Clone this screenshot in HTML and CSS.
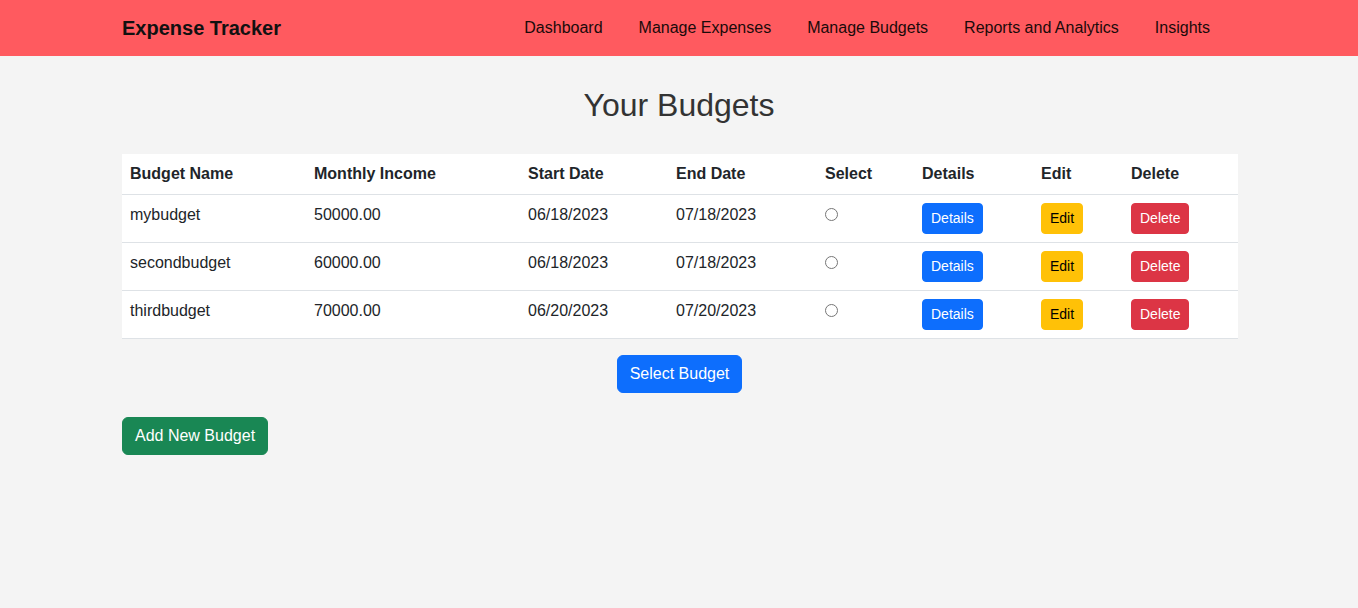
FILE: index.html
```html
<!DOCTYPE html>
<html lang="en">
<head>
<meta charset="utf-8">
<title>Expense Tracker</title>
<link rel="stylesheet" href="styles.css">
</head>
<body>
<nav class="navbar">
  <div class="container nav-inner">
    <a class="brand" href="#">Expense Tracker</a>
    <ul class="nav-links">
      <li><a href="#">Dashboard</a></li>
      <li><a href="#">Manage Expenses</a></li>
      <li><a href="#">Manage Budgets</a></li>
      <li><a href="#">Reports and Analytics</a></li>
      <li><a href="#">Insights</a></li>
    </ul>
  </div>
</nav>
<main class="container">
  <h2 class="title">Your Budgets</h2>
  <table class="budgets">
    <thead>
      <tr>
        <th class="c-name">Budget Name</th>
        <th class="c-income">Monthly Income</th>
        <th class="c-start">Start Date</th>
        <th class="c-end">End Date</th>
        <th class="c-select">Select</th>
        <th class="c-details">Details</th>
        <th class="c-edit">Edit</th>
        <th class="c-delete">Delete</th>
      </tr>
    </thead>
    <tbody>
      <tr>
        <td>mybudget</td><td>50000.00</td><td>06/18/2023</td><td>07/18/2023</td>
        <td><input type="radio" name="budget" class="radio"></td>
        <td class="btn-cell"><button class="btn btn-sm btn-primary">Details</button></td>
        <td class="btn-cell"><button class="btn btn-sm btn-warning">Edit</button></td>
        <td class="btn-cell"><button class="btn btn-sm btn-danger">Delete</button></td>
      </tr>
      <tr>
        <td>secondbudget</td><td>60000.00</td><td>06/18/2023</td><td>07/18/2023</td>
        <td><input type="radio" name="budget" class="radio"></td>
        <td class="btn-cell"><button class="btn btn-sm btn-primary">Details</button></td>
        <td class="btn-cell"><button class="btn btn-sm btn-warning">Edit</button></td>
        <td class="btn-cell"><button class="btn btn-sm btn-danger">Delete</button></td>
      </tr>
      <tr>
        <td>thirdbudget</td><td>70000.00</td><td>06/20/2023</td><td>07/20/2023</td>
        <td><input type="radio" name="budget" class="radio"></td>
        <td class="btn-cell"><button class="btn btn-sm btn-primary">Details</button></td>
        <td class="btn-cell"><button class="btn btn-sm btn-warning">Edit</button></td>
        <td class="btn-cell"><button class="btn btn-sm btn-danger">Delete</button></td>
      </tr>
    </tbody>
  </table>
  <div class="select-row">
    <button class="btn btn-primary">Select Budget</button>
  </div>
  <div class="add-row">
    <button class="btn btn-success">Add New Budget</button>
  </div>
</main>
</body>
</html>
```
FILE: styles.css
```css
* { box-sizing: border-box; }
html, body { margin: 0; padding: 0; }
body {
  background: #f4f4f4;
  font-family: "Liberation Sans", Arial, sans-serif;
  font-size: 16px;
  line-height: 1.5;
  color: #212529;
}
.container {
  width: 1140px;
  margin: 0 auto;
  padding: 0 12px;
}
.navbar {
  background: #ff5a5f;
  height: 56px;
}
.nav-inner {
  display: flex;
  align-items: center;
  justify-content: space-between;
  height: 56px;
  padding-left: 13px;
}
.brand {
  font-size: 20px;
  font-weight: bold;
  color: #111;
  text-decoration: none;
}
.nav-links {
  display: flex;
  list-style: none;
  margin: 0;
  padding: 0 9px 0 0;
}
.nav-links a {
  display: block;
  padding: 8px 18px;
  color: #1a0a0a;
  text-decoration: none;
}
.title {
  margin: 30px 0 30px;
  font-size: 32px;
  font-weight: 400;
  line-height: 1.2;
  color: #333;
  text-align: center;
}
.budgets {
  width: 1116px;
  margin-left: 1px;
  border-collapse: collapse;
  background: #fff;
}
.budgets th, .budgets td {
  padding: 8px;
  text-align: left;
  vertical-align: top;
  border-bottom: 1px solid #dee2e6;
}
.budgets th { font-weight: bold; }
.budgets td.btn-cell { padding: 8px 8px 8px; }
.c-name { width: 184px; }
.c-income { width: 214px; }
.c-start { width: 148px; }
.c-end { width: 149px; }
.c-select { width: 97px; }
.c-details { width: 119px; }
.c-edit { width: 90px; }
.c-delete { width: 115px; }
.radio {
  margin: 5px 0 0 0;
  width: 13px;
  height: 13px;
}
.btn {
  display: inline-block;
  font-family: inherit;
  font-size: 16px;
  line-height: 1.5;
  padding: 6px 12px;
  border: 1px solid transparent;
  border-radius: 6px;
  color: #fff;
  cursor: pointer;
}
.btn-sm {
  font-size: 14px;
  padding: 4px 8px;
  border-radius: 4px;
  vertical-align: top;
}
.btn-primary { background: #0d6efd; border-color: #0d6efd; }
.btn-warning { background: #ffc107; border-color: #ffc107; color: #000; }
.btn-danger { background: #dc3545; border-color: #dc3545; }
.btn-success { background: #198754; border-color: #198754; }
.select-row {
  display: flex;
  justify-content: center;
  margin-top: 16px;
  padding-left: 1px;
}
.add-row {
  margin-top: 24px;
  padding-left: 1px;
}
```
